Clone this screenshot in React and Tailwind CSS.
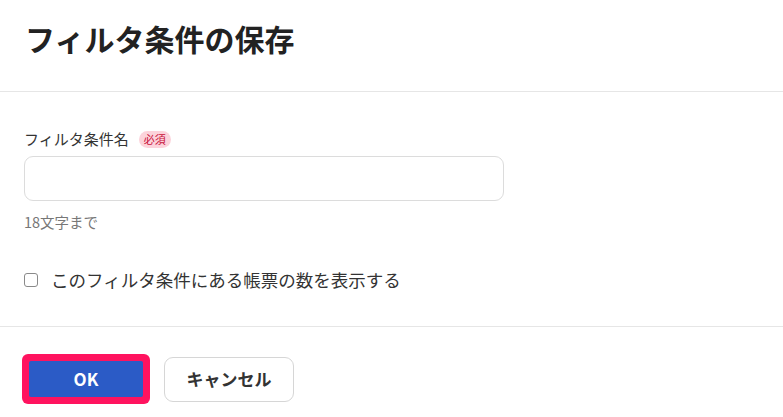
export default function App() {
  const font = { fontFamily: '"Noto Sans CJK JP", "Noto Sans", sans-serif' };
  return (
    <div className="w-[783px] h-[417px] bg-white text-[#333] overflow-hidden" style={font}>
      <div className="h-[92px] border-b border-[#e6e6e6] pl-[25px] pt-[18px]">
        <h1 className="text-[30px] leading-[40px] font-bold text-[#222]">フィルタ条件の保存</h1>
      </div>
      <div className="h-[235px] border-b border-[#e6e6e6] pl-6 pt-[37px]">
        <div className="flex items-center h-5 gap-[10px]">
          <span className="text-[15px] leading-5 text-[#333]">フィルタ条件名</span>
          <span className="h-[17px] px-[5px] rounded-full bg-[#fcd3db] text-[#c8103a] text-[11px] leading-[17px]">必須</span>
        </div>
        <div className="mt-[7px] w-[480px] h-[45px] rounded-[9px] border border-[#dcdcdc] bg-white"></div>
        <div className="mt-[11px] text-[14.5px] leading-5 text-[#777]">18文字まで</div>
        <label className="mt-9 flex items-center h-6 gap-[13px]">
          <span className="w-[14px] h-[14px] border border-[#8a8a8a] rounded-[3px] bg-white shrink-0"></span>
          <span className="text-[17.5px] leading-6 text-[#333]">このフィルタ条件にある帳票の数を表示する</span>
        </label>
      </div>
      <div className="pl-[22px] pt-[27px] flex items-center gap-[14px]">
        <div className="w-[128px] h-[50px] rounded-[6px] bg-[#ff135f] p-[7px]">
          <div className="w-full h-full bg-[#2b5bc6] rounded-[2px] flex items-center justify-center text-white font-bold text-[17px]">OK</div>
        </div>
        <button className="w-[130px] h-[45px] rounded-[9px] border border-[#d6d6d6] bg-white text-[17px] font-bold text-[#333]">キャンセル</button>
      </div>
    </div>
  );
}
